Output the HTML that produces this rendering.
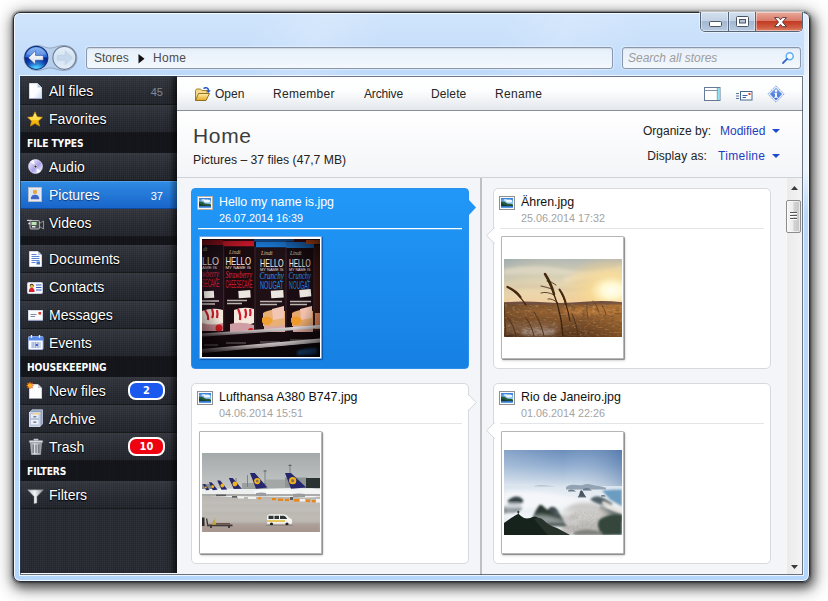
<!DOCTYPE html>
<html>
<head>
<meta charset="utf-8">
<title>Home</title>
<style>
*{box-sizing:border-box;margin:0;padding:0}
html,body{width:828px;height:601px;overflow:hidden;background:#fff;font-family:"Liberation Sans",sans-serif;}
svg{position:absolute;overflow:visible}
#win{position:absolute;left:13px;top:12px;width:797px;height:570px;border-radius:7px;
 background:
  linear-gradient(115deg,rgba(255,255,255,0) 0,rgba(255,255,255,0) 30%,rgba(255,255,255,.16) 38%,rgba(255,255,255,0) 46%,rgba(255,255,255,0) 60%,rgba(255,255,255,.14) 68%,rgba(255,255,255,0) 78%) 0 0/100% 64px no-repeat,
  linear-gradient(180deg,#d0e4fc 0,#c9e0fb 30px,#bcd9fa 64px,#b5d6fb 100%);
 border:1px solid #252d38;
 box-shadow:inset 0 0 0 1px rgba(255,255,255,.8), 0 0 2px 1px rgba(0,0,0,.42), 2px 4px 10px 2px rgba(0,0,0,.5), 2px 4px 18px 4px rgba(0,0,0,.32);}
#client{position:absolute;left:19px;top:75px;width:785px;height:501px;border:1px solid rgba(255,255,255,.75);}
#ci{position:absolute;left:0;top:0;width:783px;height:499px;background:#f3f5f9;overflow:hidden}
/* caption buttons */
#caps{position:absolute;left:700px;top:12px;width:103px;height:20px;border:1px solid #56647a;border-top:none;border-radius:0 0 5px 5px;overflow:hidden;
 box-shadow:0 0 0 1px rgba(255,255,255,.5)}
#caps>div{position:absolute;top:0;height:19px;box-shadow:inset 0 0 0 1px rgba(255,255,255,.45)}
.cb{background:linear-gradient(180deg,#d3dfee 0,#c3d2e4 45%,#a3b8d2 50%,#b6c9df 100%);}
#cmin{left:0;width:28px;border-right:1px solid #56647a}
#cmax{left:28px;width:27px;border-right:1px solid #56647a}
#cclose{left:55px;width:47px;background:linear-gradient(180deg,#e9aa9c 0,#d97b6a 45%,#c23b22 50%,#cf5a40 80%,#dc8468 100%);}
/* nav */
.box{position:absolute;top:47px;height:22px;border:1px solid #8a97aa;border-radius:3px;background:linear-gradient(180deg,#e6effa,#f3f8fd);
 font-size:12px;line-height:20px;white-space:nowrap;box-shadow:inset 0 1px 1px rgba(0,0,0,.10),0 0 0 1px rgba(255,255,255,.35)}
#addr{left:86px;width:527px;color:#4c4c4c;padding-left:7px}
#search{left:622px;width:179px;font-style:italic;color:#9c9c9c;padding-left:5px}
/* sidebar */
#side{position:absolute;left:0;top:0;width:157px;height:497px;overflow:hidden;
 background:
  repeating-linear-gradient(90deg,rgba(255,255,255,.03) 0,rgba(255,255,255,.03) 1px,rgba(0,0,0,0) 1px,rgba(0,0,0,0) 2px),
  repeating-linear-gradient(90deg,rgba(0,0,0,.06) 0,rgba(0,0,0,0) 5px,rgba(0,0,0,.05) 11px,rgba(0,0,0,0) 17px),
  repeating-linear-gradient(180deg,rgba(255,255,255,.025) 0,rgba(255,255,255,.025) 1px,rgba(0,0,0,0) 1px,rgba(0,0,0,0) 2px),
  #24272f;
 box-shadow:inset -6px 0 6px -4px rgba(0,0,0,.55)}
#side:after{content:"";position:absolute;right:0;top:0;width:8px;height:100%;background:linear-gradient(90deg,rgba(0,0,0,0),rgba(0,0,0,.4))}
.it{position:absolute;left:0;width:157px;height:28px;border-top:1px solid rgba(255,255,255,.09);border-bottom:1px solid rgba(0,0,0,.55);color:#fff;font-size:14px;line-height:27px;padding-left:29px;text-shadow:0 1px 1px #000,0 0 2px rgba(0,0,0,.8);
 background:linear-gradient(180deg,rgba(255,255,255,.05),rgba(255,255,255,0) 60%,rgba(0,0,0,.12))}
.it.sel{background:linear-gradient(180deg,#2e8ae2,#1965ca);border-top-color:#56a0ea;border-bottom-color:#0f4a9e;text-shadow:0 1px 1px rgba(0,0,40,.5)}
.hd{position:absolute;left:0;width:157px;height:20px;background:rgba(9,10,13,.64);color:#fff;font-weight:bold;font-size:10.2px;line-height:21px;padding-left:7px;font-family:"DejaVu Sans Condensed","DejaVu Sans","Liberation Sans",sans-serif;letter-spacing:-.1px}
.cnt{position:absolute;right:14px;top:1px;font-size:11px;color:#848993;text-shadow:none}
.it.sel .cnt{color:#fff}
.badge{position:absolute;left:108px;top:3px;width:37px;height:19px;border:2px solid #fff;border-radius:8px;font-size:11px;font-weight:bold;line-height:15px;text-align:center;color:#fff;text-shadow:none;font-family:"DejaVu Sans Condensed","DejaVu Sans","Liberation Sans",sans-serif}
/* toolbar */
#tb{position:absolute;left:157px;top:0;width:626px;height:35px;background:linear-gradient(180deg,#fff 0,#fcfdfd 45%,#e4e8ed 100%);border-bottom:1px solid #8a9099;font-size:12px;color:#262626}
#tb span{position:absolute;top:11px;line-height:14px;white-space:nowrap}
#hdr{position:absolute;left:157px;top:35px;width:626px;height:67px;background:linear-gradient(180deg,#fff,#f4f5f8);border-bottom:1px solid #cfd2d6}
#hdr h1{position:absolute;left:16px;top:13px;font-size:21px;font-weight:normal;letter-spacing:.65px;color:#3c3c3c;line-height:24px}
#hdr .sub{position:absolute;left:16px;top:42px;font-size:12.2px;color:#222;line-height:14px;white-space:nowrap}
.lbl{position:absolute;font-size:12px;color:#222;line-height:14px;text-align:right;white-space:nowrap}
.lnk{position:absolute;font-size:12px;color:#1c3ec0;line-height:14px;white-space:nowrap}
.dd{position:absolute;width:0;height:0;border-left:4px solid transparent;border-right:4px solid transparent;border-top:4px solid #1c49d0}
/* cards */
#vline{position:absolute;left:460px;top:102px;width:2px;height:400px;background:#bfc0c3}
.card{position:absolute;width:278px;height:181px;border:1px solid #d6d9de;border-radius:5px;background:#fff}
.card.sel{background:linear-gradient(180deg,#2198f8,#1680e3);border-color:#2b8fec;border-radius:4px}
.card .t{position:absolute;left:27px;top:6px;font-size:12.4px;line-height:15px;color:#111;white-space:nowrap}
.card .d{position:absolute;left:27px;top:23px;font-size:10.8px;line-height:13px;color:#a3a3a3;white-space:nowrap}
.card.sel .t,.card.sel .d{color:#fff}
.card .sep{position:absolute;left:6px;top:39px;width:264px;height:1px;background:#e3e5e8}
.card.sel .sep{background:#fff;height:1px;box-shadow:0 1px 0 rgba(255,255,255,.25)}
.card .th{position:absolute;left:7px;top:47px;width:123px;height:123px;background:#fff;border:1px solid #b6b6b6;border-radius:1px;box-shadow:1px 1px 1px rgba(0,0,0,.42),1px 2px 3px rgba(0,0,0,.12);overflow:hidden}
.card.sel .th{border-color:rgba(30,110,210,.6);box-shadow:1px 1px 1px rgba(0,30,90,.45)}
.th svg{left:2px}
.fi{position:absolute;left:5px;top:7px;width:16px;height:14px;border:1px solid #8e8e8e;background:#f6f6f6}
.fi i{position:absolute;left:1px;top:1px;width:12px;height:10px;background:linear-gradient(180deg,#3f86dc 0,#8cc0f0 30%,#d8ecfa 48%,#2f6a46 56%,#1e4a38 80%,#3f7fd0 90%,#5a9ae0 100%)}
.card.sel .fi{border-color:#b5aca4}
.arr{position:absolute;width:11px;height:11px;transform:rotate(45deg);background:#fff;border:1px solid #d6d9de}
/* scrollbar */
#sb{position:absolute;left:766px;top:102px;width:17px;height:397px;background:linear-gradient(90deg,#ebebeb,#f4f4f4);border-left:1px solid #f7f7f7}
#thumb{position:absolute;left:-1px;top:22px;width:15px;height:33px;border:1px solid #8c8c8c;border-radius:2px;background:linear-gradient(90deg,#f6f6f6 0,#ececec 45%,#d2d2d2 55%,#c6c6c6 100%);box-shadow:inset 0 0 0 1px rgba(255,255,255,.6)}
#thumb i{position:absolute;left:3px;width:7px;height:1px;background:#555;box-shadow:0 1px 0 #fff}
</style>
</head>
<body>
<div id="win"></div>
<div style="position:absolute;left:804px;top:14px;width:5px;height:200px;background:linear-gradient(180deg,rgba(255,255,255,.3) 0,rgba(255,255,255,.72) 35%,rgba(255,255,255,.72) 78%,rgba(255,255,255,0) 100%)"></div>
<div id="caps">
 <div id="cmin" class="cb"><svg width="14" height="7" style="left:8px;top:9px" viewBox="0 0 14 7"><rect x="0.5" y="0.5" width="12" height="5" rx="1.2" fill="#fff" stroke="#4a5464" stroke-width="1"/></svg></div>
 <div id="cmax" class="cb"><svg width="14" height="12" style="left:7px;top:4px" viewBox="0 0 14 12"><rect x="0.5" y="0.5" width="12" height="10" rx="1" fill="#fff" stroke="#4a5464"/><rect x="3.5" y="3.5" width="6" height="3.5" fill="#b4c4d8" stroke="#4a5464"/></svg></div>
 <div id="cclose"><svg width="13" height="11" style="left:17.500px;top:4.500px" viewBox="0 0 13 11"><path d="M.6.600h4l1.900 2.200L8.400.600h4L8.500 5.100l4 4.600h-4l-2-2.300-2 2.300h-4l4-4.600z" fill="#fff" stroke="#4a2c32" stroke-width=".9" stroke-linejoin="round"/></svg></div>
</div>
<!-- nav buttons -->
<svg width="64" height="32" style="left:20px;top:42px" viewBox="0 0 64 32">
 <defs>
  <linearGradient id="gb" x1="0" y1="0" x2="0" y2="1"><stop offset="0" stop-color="#6aa4f0"/><stop offset=".45" stop-color="#2e6cda"/><stop offset=".5" stop-color="#0a2890"/><stop offset=".78" stop-color="#0a36aa"/><stop offset="1" stop-color="#30bcff"/></linearGradient>
  <radialGradient id="gglow" cx=".5" cy="1" r=".55"><stop offset="0" stop-color="#5fe0ff" stop-opacity=".95"/><stop offset="1" stop-color="#2a9cf0" stop-opacity="0"/></radialGradient>
  <linearGradient id="gf" x1="0" y1="0" x2="0" y2="1"><stop offset="0" stop-color="#e6eff9"/><stop offset=".5" stop-color="#d3e2f3"/><stop offset="1" stop-color="#e3edf8"/></linearGradient>
  <linearGradient id="gar" x1="0" y1="0" x2="0" y2="1"><stop offset="0" stop-color="#fff"/><stop offset="1" stop-color="#d8dde6"/></linearGradient>
 </defs>
 <path d="M16.5 3.5C23 3.5 25 6 30 6S37 3.500 44.500 3.500A12.500 12.500 0 0 1 44.500 28.500C37 28.500 35 26 30 26S23 28.500 16.500 28.500A12.500 12.500 0 0 1 16.500 3.500Z" fill="rgba(160,180,205,.35)" stroke="rgba(110,125,145,.55)"/>
 <circle cx="16.300" cy="15.800" r="11.500" fill="url(#gb)" stroke="#14307c" stroke-width="1.200"/>
 <circle cx="16.300" cy="15.800" r="11" fill="url(#gglow)"/>
 <path d="M6.500 12A10.500 10.500 0 0 1 26 12Q16 16 6.500 12Z" fill="rgba(255,255,255,.22)"/>
 <path d="M8.300 15.800l7.200-7v4.600h7.800v4.800h-7.800v4.600z" fill="url(#gar)" stroke="#1a3a8a" stroke-width=".5" stroke-linejoin="round"/>
 <circle cx="44.400" cy="15.800" r="11.500" fill="url(#gf)" stroke="#6f7f96" stroke-width="1.200"/>
 <path d="M52.400 15.800l-7.200-7v4.600h-7.800v4.800h7.800v4.600z" fill="#c6d8ec" stroke="#b4c8e0" stroke-width=".5" stroke-linejoin="round"/>
</svg>
<div id="addr" class="box">Stores<svg width="7" height="10" style="left:51px;top:6px" viewBox="0 0 7 10"><path d="M.5 0L6.500 4.700.5 9.400z" fill="#111"/></svg><span style="position:absolute;left:66px;letter-spacing:.3px">Home</span></div>
<div id="search" class="box">Search all stores<svg width="14" height="14" style="left:158px;top:3px" viewBox="0 0 14 14"><circle cx="8.700" cy="5.200" r="3.500" fill="#f4faff" stroke="#62aef2" stroke-width="1.500"/><path d="M6.100 7.900L2 12" stroke="#3a68cc" stroke-width="1.800" stroke-linecap="round"/></svg></div>
<div id="client"><div id="ci">
 <div id="side">
  <div class="it" style="top:1px">All files<span class="cnt">45</span>
   <svg width="13" height="16" style="left:9px;top:5px" viewBox="0 0 13 16"><defs><linearGradient id="pg" x1="0" y1="0" x2="1" y2="1"><stop offset="0" stop-color="#fff"/><stop offset=".6" stop-color="#fbfcff"/><stop offset="1" stop-color="#c9d6f2"/></linearGradient></defs><path d="M.5.500h8l4 4v11H.500z" fill="url(#pg)" stroke="#e9edf5" stroke-width=".8"/><path d="M8.500.500v4h4z" fill="#b9c7e6"/><path d="M.500 15.500h12" stroke="#8e9cc0" stroke-width=".8"/></svg></div>
  <div class="it" style="top:29px">Favorites
   <svg width="16" height="16" style="left:7px;top:5px" viewBox="0 0 16 16"><defs><linearGradient id="st" x1="0" y1="0" x2="0" y2="1"><stop offset="0" stop-color="#fff08a"/><stop offset=".55" stop-color="#ffd93b"/><stop offset=".6" stop-color="#f7bd16"/><stop offset="1" stop-color="#e9a400"/></linearGradient></defs><path d="M8 .800l2.200 4.900 5.300.600-4 3.600 1.100 5.300L8 12.500l-4.600 2.700 1.100-5.300-4-3.600 5.300-.600z" fill="url(#st)" stroke="#c98a00" stroke-width=".6" stroke-linejoin="round"/></svg></div>
  <div class="hd" style="top:57px">FILE TYPES</div>
  <div class="it" style="top:77px">Audio
   <svg width="15" height="15" style="left:7.500px;top:5.300px" viewBox="0 0 16 16"><defs><linearGradient id="cd" x1="0" y1="0" x2="1" y2="1"><stop offset="0" stop-color="#f4f2ff"/><stop offset=".35" stop-color="#c9c2f6"/><stop offset=".55" stop-color="#a9a0ec"/><stop offset=".8" stop-color="#dcd8fb"/><stop offset="1" stop-color="#fff"/></linearGradient></defs><circle cx="8" cy="8" r="7.400" fill="url(#cd)" stroke="#efeefa" stroke-width=".7"/><path d="M8 8L2.500 3A7.400 7.400 0 0 1 6 .900z" fill="#fff" opacity=".8"/><path d="M8 8l5.500 5a7.400 7.400 0 0 1-3.500 2.100z" fill="#fff" opacity=".8"/><circle cx="8" cy="8" r="2.400" fill="#e8e6f6" stroke="#8a84b8" stroke-width=".5"/><circle cx="8" cy="8" r="1.200" fill="#23232c"/></svg></div>
  <div class="it sel" style="top:105px">Pictures<span class="cnt">37</span>
   <svg width="14" height="15" style="left:8.300px;top:4.800px" viewBox="0 0 15 16"><rect x=".5" y=".5" width="14" height="15" fill="#ededf0" stroke="#b9bcc4"/><rect x="2" y="2" width="11" height="11" fill="#d7e6f6"/><circle cx="7.500" cy="5.200" r="2.300" fill="#e8a33c"/><path d="M3 13c0-3.500 2-4.800 4.500-4.800S12 9.500 12 13z" fill="#3f66c8"/></svg></div>
  <div class="it" style="top:133px">Videos
   <svg width="17" height="11" style="left:7px;top:9px" viewBox="0 0 17 11"><path d="M0 .8h5v1.200H0z" fill="#d0d0d0"/><rect x="3" y="1.500" width="9.500" height="8.500" rx="1" fill="#4a4d52" stroke="#cfcfcf" stroke-width=".8"/><rect x="4.500" y="3" width="5" height="3" fill="#b8e8b0"/><rect x="5" y="7" width="3.500" height="1.500" fill="#e8e8e8"/><path d="M12.500 4.500L16.500 2v8l-4-2.500z" fill="#2e3034" stroke="#bdbdbd" stroke-width=".7"/><circle cx="2.200" cy="4.500" r="1" fill="#e6e6e6"/></svg></div>
  <div class="hd" style="top:161px;height:8px"></div>
  <div class="it" style="top:169px">Documents
   <svg width="13" height="16" style="left:9px;top:5px" viewBox="0 0 13 16"><path d="M.5.500h8.500l3.500 3.500v11.500H.500z" fill="#fdfeff" stroke="#dfe6f2" stroke-width=".8"/><path d="M9 .500v3.500h3.500z" fill="#bccbe8"/><path d="M2.500 3.500h5M2.500 5.500h8M2.500 7.500h8M2.500 9.500h8M2.500 11.500h4" stroke="#5f86d6" stroke-width="1"/><rect x="7.500" y="10.500" width="3.500" height="3" fill="#3f74d0"/></svg></div>
  <div class="it" style="top:197px">Contacts
   <svg width="16" height="12" style="left:7px;top:8px" viewBox="0 0 16 12"><rect x=".5" y=".5" width="15" height="11" rx="1" fill="#f7f8fb" stroke="#c9cede"/><path d="M1.800 10c0-3 1.300-4.200 2.900-4.200s2.900 1.200 2.900 4.200z" fill="#dc1f2c"/><circle cx="4.700" cy="3.700" r="2" fill="#3b2c26"/><circle cx="4.700" cy="4.300" r="1.500" fill="#f4b83a"/><path d="M9 3h5.500M9 5.500h5.500M9 8h5.500" stroke="#3a5fb4" stroke-width="1.200"/></svg></div>
  <div class="it" style="top:225px">Messages
   <svg width="15" height="11" style="left:8px;top:8px" viewBox="0 0 15 11"><rect x=".5" y=".5" width="14" height="9.500" fill="#fbfcfe" stroke="#d4dae8"/><path d="M.500 10.500h14" stroke="#8f9cc0"/><path d="M2.500 4.500h6M2.500 6.500h4.500" stroke="#7f8aa8" stroke-width="1"/><rect x="10.500" y="2" width="2.600" height="2.600" fill="#e23b2b"/></svg></div>
  <div class="it" style="top:253px">Events
   <svg width="16" height="15" style="left:8px;top:5px" viewBox="0 0 16 15"><rect x=".5" y="1.500" width="14.500" height="13" rx="1" fill="#fbfcff" stroke="#aab9de"/><path d="M.5 2.500a1 1 0 0 1 1-1h12.500a1 1 0 0 1 1 1V5.500H.500z" fill="#5a8bea"/><path d="M3.500 0v3M11.500 0v3" stroke="#e8eefc" stroke-width="1.300"/><path d="M3 8h10M3 10h10M3 12h10M5 7v6M7.500 7v6M10 7v6" stroke="#8ea0cc" stroke-width=".8"/><rect x="7.700" y="9" width="2.200" height="2" fill="#3a66d6"/></svg></div>
  <div class="hd" style="top:281px">HOUSEKEEPING</div>
  <div class="it" style="top:301px">New files<span class="badge" style="background:#1b59ee">2</span>
   <svg width="16" height="17" style="left:7px;top:4px" viewBox="0 0 16 17"><path d="M2.500 2.500h8.500l3.500 3.500v10.500H2.500z" fill="#fdfdfd" stroke="#e4e6ea" stroke-width=".8"/><path d="M11 2.500v3.500h3.500z" fill="#c9cdd6"/><path d="M2.500 16.500h12" stroke="#9a9ea8"/><path d="M3 0l.8 1.700L5.600 1l-.7 1.800L6.600 3.500l-1.700.8.700 1.700-1.800-.7L3 7l-.8-1.700-1.800.7.700-1.700L-.6 3.500l1.700-.7L.4 1l1.800.7z" fill="#ffb21c" stroke="#e0501a" stroke-width=".5"/></svg></div>
  <div class="it" style="top:329px">Archive
   <svg width="16" height="18" style="left:8px;top:3px" viewBox="0 0 16 18"><path d="M1.500 3.500L4 .800h10.500v14L12 17.500H1.500z" fill="#8fa0c0" stroke="#c9d2e6" stroke-width=".8"/><rect x="1.500" y="3.500" width="10.500" height="14" fill="#b9c4dc" stroke="#dfe5f2" stroke-width=".7"/><rect x="3" y="5" width="7.500" height="4" fill="#e8ecf6"/><path d="M4 5.500h7.500l1.500-1.500H5.500z" fill="#f2d38a"/><rect x="3" y="11" width="7.500" height="4.500" fill="#eef1f8"/><rect x="5.300" y="12.500" width="3" height="1.300" fill="#5a6a8c"/><rect x="5.300" y="7.200" width="3" height="1.200" fill="#5a6a8c"/></svg></div>
  <div class="it" style="top:357px">Trash<span class="badge" style="background:#ee0210">10</span>
   <svg width="16" height="17" style="left:8px;top:4px" viewBox="0 0 16 17"><defs><linearGradient id="tr" x1="0" y1="0" x2="1" y2="0"><stop offset="0" stop-color="#8f959c"/><stop offset=".4" stop-color="#e2e5e8"/><stop offset="1" stop-color="#80868e"/></linearGradient></defs><path d="M2.500 5h11l-1 11.500h-9z" fill="url(#tr)" stroke="#c9cdd2" stroke-width=".6"/><path d="M5.200 6.500v8.500M8 6.500v8.500M10.800 6.500v8.500" stroke="#5f656d" stroke-width="1"/><rect x="1.200" y="2.500" width="13.600" height="2.300" rx="1" fill="#d9dde1" stroke="#8b9198" stroke-width=".6"/><rect x="5.500" y=".8" width="5" height="1.800" rx=".8" fill="#c3c8ce"/></svg></div>
  <div class="hd" style="top:385px">FILTERS</div>
  <div class="it" style="top:405px">Filters
   <svg width="17" height="15" style="left:7px;top:7px" viewBox="0 0 17 15"><defs><linearGradient id="fu" x1="0" y1="0" x2="1" y2="0"><stop offset="0" stop-color="#b9bcc0"/><stop offset=".45" stop-color="#f2f3f4"/><stop offset="1" stop-color="#8f9398"/></linearGradient></defs><path d="M.500.800h16L10 7.500V14l-3 .8V7.500z" fill="url(#fu)" stroke="#7d8288" stroke-width=".5"/></svg></div>
 </div>
 <div id="tb">
  <svg width="17" height="16" style="left:17px;top:10px" viewBox="0 0 17 16"><defs><linearGradient id="fo" x1="0" y1="0" x2="0" y2="1"><stop offset="0" stop-color="#fdeeb0"/><stop offset="1" stop-color="#e9a91e"/></linearGradient></defs><path d="M1.500 14.500V4.500l1-1.500h4l1.500 1.500h5v2.500" fill="#f6d98a" stroke="#9a7420" stroke-width=".9"/><path d="M1.500 14.500L4.500 7.500h11l-3.500 7z" fill="url(#fo)" stroke="#8a6414" stroke-width=".9" stroke-linejoin="round"/><path d="M9.500 2.500c2.500-1.800 5-.5 5 2.200" fill="none" stroke="#1d4fd0" stroke-width="1.500"/><path d="M12.300 4.200h4.400l-2.200 2.800z" fill="#1d4fd0"/></svg>
  <span style="left:38px">Open</span><span style="left:96px;letter-spacing:.32px">Remember</span><span style="left:187px;letter-spacing:-.15px">Archive</span><span style="left:254px;letter-spacing:.12px">Delete</span><span style="left:318px;letter-spacing:.3px">Rename</span>
  <svg width="17" height="15" style="left:527px;top:11px" viewBox="0 0 17 15"><rect x=".5" y=".5" width="15.500" height="13" fill="#fff" stroke="#667a98"/><path d="M.5 3.500h13" stroke="#7f90aa"/><rect x="13.500" y="1" width="2" height="12" fill="#8fe2f2"/><path d="M13.300 1v12" stroke="#667a98" stroke-width=".7"/></svg>
  <svg width="17" height="10" style="left:559px;top:14.800px" viewBox="0 0 17 10"><path d="M0 2.500h3M0 5h3M0 7.500h3" stroke="#5c7594" stroke-width="1"/><rect x="4.500" y=".5" width="11.500" height="8.500" fill="#fff" stroke="#48688e"/><path d="M6.500 4.500h5M6.500 6.500h3.500" stroke="#3b62b0" stroke-width="1.100"/><rect x="12.500" y="2" width="2" height="2" fill="#e03a24"/></svg>
  <svg width="18" height="18" style="left:590px;top:8.600px" viewBox="0 0 18 18"><defs><linearGradient id="inf" x1="0" y1="0" x2="0" y2="1"><stop offset="0" stop-color="#7da4f0"/><stop offset="1" stop-color="#3568d6"/></linearGradient></defs><path d="M9 .800L17.200 9 9 17.200.800 9z" fill="#e9f0fd" stroke="#7f9fe6" stroke-width="1" stroke-dasharray="1.500 .8"/><path d="M9 2.800L15.200 9 9 15.200 2.800 9z" fill="url(#inf)"/><circle cx="9" cy="5.700" r="1.200" fill="#fff"/><path d="M7.500 7.800h2.400v4h1v1h-3.800v-1h1v-3h-.6z" fill="#fff"/></svg>
 </div>
 <div id="hdr">
  <h1>Home</h1>
  <div class="sub">Pictures – 37 files (47,7 MB)</div>
  <div class="lbl" style="right:92px;top:13px">Organize by:</div><div class="lnk" style="left:543px;top:13px">Modified</div><div class="dd" style="left:595px;top:18px"></div>
  <div class="lbl" style="right:96px;top:38px;letter-spacing:.1px">Display as:</div><div class="lnk" style="left:541px;top:38px;letter-spacing:.3px">Timeline</div><div class="dd" style="left:595px;top:43px"></div>
 </div>
 <div id="vline"></div>
 <div class="card sel" style="left:171px;top:112px"><svg class="fi2" width="16" height="14" style="left:5px;top:7px" viewBox="0 0 16 14"><defs><linearGradient id="fs1" x1="0" y1="0" x2="0" y2="1"><stop offset="0" stop-color="#2f7fdc"/><stop offset="1" stop-color="#9fd0f6"/></linearGradient></defs><rect x=".5" y=".5" width="15" height="13" fill="#fbfbfb" stroke="#b9aea4"/><rect x="2" y="2" width="12" height="6" fill="url(#fs1)"/><ellipse cx="10" cy="5" rx="3.200" ry="1.500" fill="#fff" opacity=".9"/><ellipse cx="6.500" cy="4" rx="2" ry="1" fill="#fff" opacity=".7"/><path d="M2 5.500q2.500-.5 4.500 1t4 1.200 3.500.8V11H2z" fill="#245c3c"/><path d="M2 7.500q3 .5 5 1.500t7 .5V11H2z" fill="#163e30"/><rect x="2" y="10" width="12" height="2" fill="#5a9be6"/><rect x="2" y="10" width="12" height=".8" fill="#2f68c0"/></svg><div class="t">Hello my name is.jpg</div><div class="d">26.07.2014 16:39</div><div class="sep"></div><div class="th" id="th1"><svg width="118" height="118" style="left:2px;top:2px" viewBox="0 0 118 118"><defs><clipPath id="c1"><rect width="118" height="118"/></clipPath><radialGradient id="v1" cx=".5" cy=".48" r=".72"><stop offset=".55" stop-color="#000" stop-opacity="0"/><stop offset="1" stop-color="#000" stop-opacity=".75"/></radialGradient><linearGradient id="rail" x1="0" y1="0" x2="0" y2="1"><stop offset="0" stop-color="#f2eeee"/><stop offset=".5" stop-color="#b9b0b2"/><stop offset="1" stop-color="#4a3c40"/></linearGradient><filter id="b1"><feGaussianBlur stdDeviation=".6"/></filter><filter id="b1b"><feGaussianBlur stdDeviation="1.2"/></filter></defs>
<g clip-path="url(#c1)"><rect width="118" height="118" fill="#1b0d12"/>
<rect x="0" y="0" width="118" height="3" fill="#3a0a10"/>
<rect x="0" y="1" width="21" height="5" fill="#a3121f"/><rect x="21" y="2" width="31" height="5.500" fill="#d3192c"/><rect x="54" y="2.500" width="30" height="6" fill="#1b7ad6"/><rect x="84" y="3" width="28" height="6" fill="#1a6cc2"/><rect x="52" y="0" width="40" height="2.500" fill="#0f4f96"/><rect x="104" y="1" width="14" height="4" fill="#d8521c"/>
<rect x="0" y="6" width="21.500" height="84" fill="#21101a"/><rect x="22" y="7.500" width="30.500" height="84" fill="#1a0b10"/><rect x="54" y="8.500" width="29.500" height="84" fill="#1f1016"/><rect x="84.500" y="9" width="27" height="84" fill="#1a0c12"/><rect x="112.500" y="6" width="6" height="86" fill="#3a1510"/>
<path d="M21.700 6v86M53 7v86M84 8v86M112 8v84" stroke="#4a3038" stroke-width=".8"/>
<g font-family="'Liberation Serif',serif" font-style="italic" fill="#d9c59a" font-size="5.500"><text x="27" y="15">Lindt</text><text x="59" y="15.500">Lindt</text><text x="88" y="15.500">Lindt</text><text x="1" y="12">dt</text></g>
<g font-family="'Liberation Sans',sans-serif" fill="#f3eee8" font-size="11.500"><text x="23.500" y="26.400" textLength="25.500" lengthAdjust="spacingAndGlyphs">HELLO</text><text x="58" y="27.500" textLength="23.500" lengthAdjust="spacingAndGlyphs">HELLO</text><text x="87" y="27.500" textLength="21.500" lengthAdjust="spacingAndGlyphs">HELLO</text><text x="0" y="26" textLength="17" lengthAdjust="spacingAndGlyphs">LLO</text></g>
<g font-family="'Liberation Sans',sans-serif" fill="#e6ded8" font-size="4.400"><text x="23.500" y="30.400" textLength="25.500" lengthAdjust="spacingAndGlyphs">MY NAME IS</text><text x="58" y="31.500" textLength="23.500" lengthAdjust="spacingAndGlyphs">MY NAME IS</text><text x="87" y="31.500" textLength="21.500" lengthAdjust="spacingAndGlyphs">MY NAME IS</text><text x="0" y="30.200" textLength="15" lengthAdjust="spacingAndGlyphs">AME IS</text></g>
<g font-family="'Liberation Serif',serif" font-style="italic" font-size="10.500"><text x="23.500" y="38.500" fill="#e6263c" textLength="26.500" lengthAdjust="spacingAndGlyphs">Strawberry</text><text x="0" y="38" fill="#d6223a" textLength="17" lengthAdjust="spacingAndGlyphs">wberry</text><text x="57.500" y="40" fill="#2f93ea" textLength="24.500" lengthAdjust="spacingAndGlyphs">Crunchy</text><text x="86.500" y="40" fill="#2888de" textLength="22.500" lengthAdjust="spacingAndGlyphs">Crunchy</text></g>
<g font-family="'Liberation Sans',sans-serif" font-size="10.500"><text x="23.500" y="48.500" fill="#d81a30" textLength="27" lengthAdjust="spacingAndGlyphs">CHEESECAKE</text><text x="0" y="48" fill="#c81a2e" textLength="17.500" lengthAdjust="spacingAndGlyphs">SECAKE</text><text x="58" y="49.800" fill="#2289e4" textLength="23.500" lengthAdjust="spacingAndGlyphs">NOUGAT</text><text x="87" y="49.800" fill="#1e7fd4" textLength="21.500" lengthAdjust="spacingAndGlyphs">NOUGAT</text></g>
<g fill="#ebe7e0"><rect x="36.500" y="51.500" width="12" height="7.500" transform="rotate(-4 42 55)"/><rect x="69" y="51.500" width="12.500" height="7.500" transform="rotate(-4 74 55)"/><rect x="97.500" y="50.500" width="11.500" height="7.500" transform="rotate(-5 102 54)"/><rect x="2" y="52" width="10" height="7" transform="rotate(-4 7 55)"/></g>
<g stroke="#d9d2cc" stroke-width="1.300" opacity=".85"><path d="M25 61.500h20M25 64.500h15M58 62.500h22M58 65.500h17M88 62.500h21M88 65.500h17M0 62h17M0 65h13"/></g>
<g filter="url(#b1)"><path d="M0 72q10-4 21-1v18q-10 4-21 1z" fill="#f3e6da"/><path d="M3 71q4 6 3 10M10 70q2 6 0 9M15 71q1 4 0 8" stroke="#c81a2c" stroke-width="2.200" fill="none"/><path d="M0 84q10 3 21 0v8H0z" fill="#c98d92"/><circle cx="17" cy="89" r="3.500" fill="#d21d24"/>
<path d="M32 71q10-4 20-1v14q-10 4-20 1z" fill="#f5e8dc"/><path d="M36 70q3 6 2 11M43 70q2 5 0 9M48 70q1 4 0 7" stroke="#cc1c2e" stroke-width="2.200" fill="none"/><path d="M28 85q12-3 24 1v8q-12 2-24-1z" fill="#cf9ea4"/><circle cx="49" cy="92" r="3" fill="#cf2026"/>
<path d="M61 74q10-6 22-2v14q-12 5-22 1z" fill="#e9b076"/><path d="M70 70l12-3v12l-11 2z" fill="#f1c6b4"/><path d="M60 79q5-3 9 0t-2 7q-5 1-7-3z" fill="#f0a030"/><path d="M62 86q10 3 21-1v8q-10 3-21 0z" fill="#d9a8a0"/>
<path d="M90 74q10-6 21-2v14q-11 5-21 1z" fill="#e6a86e"/><path d="M98 70l12-3v12l-11 2z" fill="#f0c0ac"/><path d="M89 79q5-3 9 0t-2 7q-5 1-7-3z" fill="#ee9a2c"/><path d="M91 86q10 3 20-1v8q-10 3-20 0z" fill="#d6a29a"/>
<path d="M113 74h5v16h-5z" fill="#e88a5a"/></g>
<rect x="0" y="93" width="118" height="25" fill="#150a0e"/>
<g stroke="#cfc7c4" stroke-width=".9" opacity=".6"><path d="M24 104h20M58 103h20M88 101h20M2 106h14"/></g>
<path d="M0 94.500L118 86v3.200L0 97.800z" fill="url(#rail)" filter="url(#b1)"/>
<path d="M0 110L118 99.500v4L0 114.200z" fill="url(#rail)" filter="url(#b1)"/>
<path d="M0 114.500L118 104v14H0z" fill="#0e0709"/>
<path d="M95 112q8-3 20-3v6q-12 2-20 1z" fill="#1d5ea8" filter="url(#b1b)" opacity=".8"/>
<rect width="118" height="118" fill="url(#v1)"/></g></svg></div></div>
 <div class="card" style="left:473px;top:112px"><svg class="fi2" width="16" height="14" style="left:5px;top:7px" viewBox="0 0 16 14"><defs><linearGradient id="fs2" x1="0" y1="0" x2="0" y2="1"><stop offset="0" stop-color="#2f7fdc"/><stop offset="1" stop-color="#9fd0f6"/></linearGradient></defs><rect x=".5" y=".5" width="15" height="13" fill="#fbfbfb" stroke="#8f8f8f"/><rect x="2" y="2" width="12" height="6" fill="url(#fs2)"/><ellipse cx="10" cy="5" rx="3.200" ry="1.500" fill="#fff" opacity=".9"/><ellipse cx="6.500" cy="4" rx="2" ry="1" fill="#fff" opacity=".7"/><path d="M2 5.500q2.500-.5 4.500 1t4 1.200 3.500.8V11H2z" fill="#245c3c"/><path d="M2 7.500q3 .5 5 1.500t7 .5V11H2z" fill="#163e30"/><rect x="2" y="10" width="12" height="2" fill="#5a9be6"/><rect x="2" y="10" width="12" height=".8" fill="#2f68c0"/></svg><div class="t">Ähren.jpg</div><div class="d">25.06.2014 17:32</div><div class="sep"></div><div class="th" id="th2"><svg width="118" height="78" style="left:2px;top:22px" viewBox="0 0 118 78"><defs><clipPath id="c2"><rect width="118" height="78"/></clipPath><linearGradient id="sk2" x1="0" y1="0" x2="0" y2="1"><stop offset="0" stop-color="#b3b9b4"/><stop offset=".18" stop-color="#d0ccb6"/><stop offset=".38" stop-color="#ead9b0"/><stop offset=".56" stop-color="#f0d0a2"/></linearGradient><linearGradient id="sk2b" x1="0" y1="0" x2="1" y2=".5"><stop offset="0" stop-color="#8ea0aa" stop-opacity=".5"/><stop offset=".45" stop-color="#d8c8a8" stop-opacity="0"/></linearGradient><radialGradient id="sun" cx="0" cy="0" r="1" gradientUnits="userSpaceOnUse" gradientTransform="translate(107.500 31.500) scale(50 36)"><stop offset="0" stop-color="#fffef4"/><stop offset=".2" stop-color="#fff8d0"/><stop offset=".42" stop-color="#fbdc92" stop-opacity=".75"/><stop offset="1" stop-color="#f3c47c" stop-opacity="0"/></radialGradient><linearGradient id="fd2" x1="0" y1="0" x2="0" y2="1"><stop offset="0" stop-color="#7d5430"/><stop offset=".25" stop-color="#9a6434"/><stop offset="1" stop-color="#50301a"/></linearGradient><linearGradient id="fd2b" x1="0" y1="0" x2="1" y2="0"><stop offset="0" stop-color="#2a1a10" stop-opacity=".25"/><stop offset=".6" stop-color="#c07a30" stop-opacity="0"/><stop offset="1" stop-color="#d88a30" stop-opacity=".35"/></linearGradient><filter id="b2"><feGaussianBlur stdDeviation="1.400"/></filter><filter id="b2s"><feGaussianBlur stdDeviation=".35"/></filter><filter id="n2" x="0" y="0" width="1" height="1"><feTurbulence type="fractalNoise" baseFrequency=".18 .5" numOctaves="3" seed="5"/><feColorMatrix values="0 0 0 0 .16 0 0 0 0 .08 0 0 0 0 .03 0 0 0 2.200 -1"/></filter><filter id="n2b" x="0" y="0" width="1" height="1"><feTurbulence type="fractalNoise" baseFrequency=".25 .6" numOctaves="2" seed="11"/><feColorMatrix values="0 0 0 0 .85 0 0 0 0 .6 0 0 0 0 .35 0 0 0 2 -1.150"/></filter></defs>
<g clip-path="url(#c2)"><rect width="118" height="78" fill="url(#sk2)"/><rect width="118" height="44" fill="url(#sk2b)"/>
<g filter="url(#b2)" opacity=".7"><path d="M0 10q30-6 60 0t58-4v6q-30 6-58 4T0 16z" fill="#e4dcc6"/><path d="M0 27q25-5 50 0t40-2v4q-20 4-40 2T0 31z" fill="#d8c6a8"/><path d="M60 19q25-8 58-6v5q-30 0-58 6z" fill="#f2e4c2"/></g>
<rect width="118" height="78" fill="url(#sun)"/>
<rect x="0" y="44" width="118" height="34" fill="url(#fd2)"/><rect x="0" y="44" width="118" height="34" fill="url(#fd2b)"/>
<path d="M0 43.300q20-1.500 40 0t40-.5 38 .5v2.200H0z" fill="#6f5040" filter="url(#b2s)"/>
<g filter="url(#b2)"><path d="M60 49q25-3 58-4v9q-30 2-58 2z" fill="#c8823c" opacity=".55"/><path d="M0 64q25-3 55 0v10q-28 3-55 0z" fill="#8f6a50" opacity=".6"/><path d="M18 70q15-2 32 0v6q-15 2-32 0z" fill="#b0a49c" opacity=".6"/></g>
<rect x="0" y="45" width="118" height="33" filter="url(#n2)"/><rect x="0" y="45" width="118" height="33" filter="url(#n2b)" opacity=".6"/>
<g fill="none" stroke="#3a2210" stroke-linecap="round" filter="url(#b2s)"><path d="M59 77Q57 45 41 15" stroke-width="1.400"/><path d="M41 15q6 9 9 20" stroke-width="2.500" stroke="#46290f"/><path d="M22 46Q14 34 3.500 28" stroke-width="1.300"/><path d="M3.500 28q9 4 13 10" stroke-width="2.200" stroke="#46290f"/><path d="M66 62Q63 44 55.500 30.500" stroke-width="1.100"/><path d="M55.500 30.500q5 7 6.500 15" stroke-width="2.100" stroke="#46290f"/><path d="M48 30q-6-2-11-3M50 36q-7-4-13-2M52 26q-5-4-9-4M54 44q-6-5-10-4" stroke-width=".8"/><path d="M40 77q-3-14-10-24M30 77q-2-10-8-18M74 77q-1-12-6-22M12 77Q10 66 3 58M2 77Q1 60 0 44" stroke-width="1" stroke="#4f321a"/><path d="M95 54q-2-8-6-12M102 56q-1-6-4-10M84 60q-2-10-1-16" stroke-width=".9" stroke="#6a4424"/></g>
</g></svg></div></div>
 <div class="card" style="left:171px;top:307px"><svg class="fi2" width="16" height="14" style="left:5px;top:7px" viewBox="0 0 16 14"><defs><linearGradient id="fs3" x1="0" y1="0" x2="0" y2="1"><stop offset="0" stop-color="#2f7fdc"/><stop offset="1" stop-color="#9fd0f6"/></linearGradient></defs><rect x=".5" y=".5" width="15" height="13" fill="#fbfbfb" stroke="#8f8f8f"/><rect x="2" y="2" width="12" height="6" fill="url(#fs3)"/><ellipse cx="10" cy="5" rx="3.200" ry="1.500" fill="#fff" opacity=".9"/><ellipse cx="6.500" cy="4" rx="2" ry="1" fill="#fff" opacity=".7"/><path d="M2 5.500q2.500-.5 4.500 1t4 1.200 3.500.8V11H2z" fill="#245c3c"/><path d="M2 7.500q3 .5 5 1.500t7 .5V11H2z" fill="#163e30"/><rect x="2" y="10" width="12" height="2" fill="#5a9be6"/><rect x="2" y="10" width="12" height=".8" fill="#2f68c0"/></svg><div class="t">Lufthansa A380 B747.jpg</div><div class="d">04.06.2014 15:51</div><div class="sep"></div><div class="th" id="th3"><svg width="118" height="79" style="left:2px;top:21px" viewBox="0 0 118 79"><defs><clipPath id="c3"><rect width="118" height="79"/></clipPath><linearGradient id="sk3" x1="0" y1="0" x2="0" y2="1"><stop offset="0" stop-color="#a4a9ab"/><stop offset="1" stop-color="#c9cbc9"/></linearGradient><linearGradient id="gr3" x1="0" y1="0" x2="0" y2="1"><stop offset="0" stop-color="#b4b2ae"/><stop offset=".3" stop-color="#c2bfba"/><stop offset=".75" stop-color="#bdb8b2"/><stop offset="1" stop-color="#a99a94"/></linearGradient><filter id="b3"><feGaussianBlur stdDeviation=".4"/></filter><filter id="b3b"><feGaussianBlur stdDeviation="1"/></filter></defs>
<g clip-path="url(#c3)"><rect width="118" height="40" fill="url(#sk3)"/>
<g filter="url(#b3)"><rect x="40" y="30" width="26" height="6" fill="#9aa09f"/><rect x="64" y="26.500" width="40" height="9" fill="#a3a8a6"/><rect x="83" y="24.500" width="22" height="10" fill="#8d9494"/><rect x="104" y="25" width="14" height="10" fill="#2b3232"/><rect x="0" y="31" width="12" height="5" fill="#858c8c"/>
<path d="M63 17v18M88 11v16M45.500 22v12M34 25v9" stroke="#6d7373" stroke-width=".8"/><path d="M61.500 18h3M86.500 12.500h3" stroke="#5d6363" stroke-width="1.200"/></g>
<rect x="0" y="39" width="118" height="40" fill="url(#gr3)"/>
<g filter="url(#b3)"><path d="M0 36h10l10-.5 20 .5h20l30-1 20 .5 8 1v6l-30 1.500-30-.5-30 .5-20-1H0z" fill="#eef0f0"/><path d="M52 38q14-3 36-1l6 4q-20 3-40 1z" fill="#f8f9f9"/><path d="M88 37q14-2 30-.5v7q-16 2-26 0z" fill="#f3f4f4"/><path d="M0 41h118v2H0z" fill="#8d8c8a" opacity=".7"/>
<path d="M54 40q6-1 10 0v3h-10zM91 41q6-1 12 0v3h-12z" fill="#9a9c9e"/>
<g fill="#25276c"><path d="M83 20h6l15.300 14.600L89 35.700z"/><path d="M48 20h4.800l12.600 14.600L54 35.700z"/><path d="M26.800 24.900h3.900l9.100 10.800-8 .300z"/><path d="M15.200 27.500h3l7.100 8.900-5.800.400z"/><path d="M6.900 29.200h2.600l6.100 7.600-4.800.400z"/><path d="M1 31h2l4.500 6-3.500.300z"/></g>
<g fill="#f2b21c"><circle cx="90.700" cy="27.700" r="3.600"/><circle cx="55.200" cy="28.100" r="3.100"/><circle cx="32.900" cy="31" r="2.400"/><circle cx="20.300" cy="32.500" r="1.900"/><circle cx="10.600" cy="33.500" r="1.500"/><circle cx="3.700" cy="34.500" r="1.100"/></g>
<g fill="#3a3c7c"><circle cx="90.700" cy="27.700" r="1.700" opacity=".55"/><circle cx="55.200" cy="28.100" r="1.400" opacity=".55"/></g>
<g fill="#e8861c"><rect x="70" y="45" width="4" height="2.200"/><rect x="76" y="45.500" width="5" height="2.400"/><rect x="83" y="45.800" width="4" height="2.300"/><rect x="92" y="46" width="5" height="2.600"/><rect x="104" y="46.500" width="4" height="2.600"/><rect x="110" y="47" width="3.500" height="2.400"/><rect x="56" y="44.500" width="3" height="1.800"/></g>
<g fill="#f1f1ef"><rect x="36" y="43.500" width="6" height="2"/><rect x="46" y="44" width="8" height="2"/><rect x="98" y="46" width="5" height="2.500"/><rect x="114" y="46" width="4" height="3.500"/></g>
<g fill="#5a5c60"><rect x="14" y="41.500" width="10" height="1.600"/><rect x="30" y="43" width="5" height="1.600"/><rect x="88" y="44" width="3" height="3"/></g></g>
<g filter="url(#b3b)" opacity=".5"><path d="M0 52h118v1.200H0zM0 60h118v1H0z" fill="#aaa6a0"/><path d="M0 70h118v9H0z" fill="#a38e88"/></g>
<g filter="url(#b3)"><path d="M65 64q0-2.500 2.500-2.700h14.500q3 .2 5 3.500l2.500 1.200q.8.600.5 2.500v2.300H65z" fill="#f4f4f2"/><path d="M66.500 62.800h5v3.200h-5zM72.500 62.800h4.500v3.200h-4.500zM78 62.800h4q1.800.4 3.200 3.200H78z" fill="#2f3436"/><rect x="65" y="67.300" width="18" height="1.500" fill="#e2b82c"/><circle cx="69.500" cy="71" r="1.600" fill="#222"/><circle cx="85" cy="71" r="1.600" fill="#222"/><path d="M64 72.500h27" stroke="#8a8682" stroke-width=".8"/>
<path d="M5 71.500h25.500v1.800H5z" fill="#3f3a38"/><path d="M5 71.500l-1-6h1.200l1 6zM0 64.500h2.500v8.500H0z" fill="#2f2c2c"/><path d="M12 67l1.500 4.500h-3zM13 66.500v-1.500" fill="#c8a838" stroke="#b89828" stroke-width=".6"/><circle cx="9" cy="74" r="1" fill="#222"/><circle cx="27" cy="74" r="1" fill="#222"/><path d="M14 70h14v1.500H14z" fill="#6a5048"/></g>
</g></svg></div></div>
 <div class="card" style="left:473px;top:307px"><svg class="fi2" width="16" height="14" style="left:5px;top:7px" viewBox="0 0 16 14"><defs><linearGradient id="fs4" x1="0" y1="0" x2="0" y2="1"><stop offset="0" stop-color="#2f7fdc"/><stop offset="1" stop-color="#9fd0f6"/></linearGradient></defs><rect x=".5" y=".5" width="15" height="13" fill="#fbfbfb" stroke="#8f8f8f"/><rect x="2" y="2" width="12" height="6" fill="url(#fs4)"/><ellipse cx="10" cy="5" rx="3.200" ry="1.500" fill="#fff" opacity=".9"/><ellipse cx="6.500" cy="4" rx="2" ry="1" fill="#fff" opacity=".7"/><path d="M2 5.500q2.500-.5 4.500 1t4 1.200 3.500.8V11H2z" fill="#245c3c"/><path d="M2 7.500q3 .5 5 1.500t7 .5V11H2z" fill="#163e30"/><rect x="2" y="10" width="12" height="2" fill="#5a9be6"/><rect x="2" y="10" width="12" height=".8" fill="#2f68c0"/></svg><div class="t">Rio de Janeiro.jpg</div><div class="d">01.06.2014 22:26</div><div class="sep"></div><div class="th" id="th4"><svg width="118" height="85" style="left:2px;top:18px" viewBox="0 0 118 85"><defs><clipPath id="c4"><rect width="118" height="85"/></clipPath><clipPath id="c4n"><ellipse cx="82" cy="73" rx="21" ry="13"/></clipPath><linearGradient id="sk4" x1="0" y1="0" x2="0" y2="1"><stop offset="0" stop-color="#6a8dba"/><stop offset=".18" stop-color="#8eabcf"/><stop offset=".34" stop-color="#bccde1"/><stop offset=".44" stop-color="#dde6ef"/><stop offset=".6" stop-color="#eef1f5"/><stop offset="1" stop-color="#e4e7ea"/></linearGradient><linearGradient id="sk4b" x1="0" y1="0" x2="1" y2="0"><stop offset="0" stop-color="#fff" stop-opacity=".2"/><stop offset=".5" stop-color="#fff" stop-opacity="0"/><stop offset="1" stop-color="#2a5590" stop-opacity=".32"/></linearGradient><filter id="b4"><feGaussianBlur stdDeviation=".9"/></filter><filter id="b4b"><feGaussianBlur stdDeviation="2"/></filter><filter id="b4s"><feGaussianBlur stdDeviation=".45"/></filter><filter id="n4" x="0" y="0" width="1" height="1"><feTurbulence type="fractalNoise" baseFrequency=".55" numOctaves="2" seed="7"/><feColorMatrix values="0 0 0 0 .25 0 0 0 0 .25 0 0 0 0 .25 0 0 0 1.600 -.7"/></filter></defs>
<g clip-path="url(#c4)"><rect width="118" height="85" fill="url(#sk4)"/><rect width="118" height="36" fill="url(#sk4b)"/>
<path d="M98 40.500q10-1 20-1v17l-12-7z" fill="#6c9cbf" filter="url(#b4)"/>
<g filter="url(#b4s)"><path d="M62 37q4-2.800 8-2.200t8 .4q5-1.800 9-.8t8 1.600l7 1.700v1.800H62z" fill="#93a3b3"/><path d="M30 36q6-1.600 12-.8t10 1.300H30z" fill="#b7c4d0"/><path d="M64 40.500q3-1.500 6-.5l2 1.500h-8zM79 39q3-1.500 6-.5l3 2h-9z" fill="#6c7e8e"/><path d="M97 45.500q2-1.200 4 0l1 1h-5z" fill="#5f7282"/></g>
<path d="M73.500 47.500q1.800-2 2.800-6.500 1-1.500 2.200 0 1.500 3.500 4 6.500z" fill="#46525e" filter="url(#b4s)"/>
<g filter="url(#b4b)"><path d="M0 42q30-3 55 3t35 4l-6 10H0z" fill="#f4f6f9"/></g>
<g filter="url(#b4)"><path d="M86 49.500q4-4 9-3t8 3.500l6 4-4 3q-12-2-19-7.500z" fill="#505e66"/><path d="M99 51l19 9v5l-20-11z" fill="#e7e4de"/><path d="M96 56l22 8v8l-24-10z" fill="#6f7c7a"/>
</g><g filter="url(#b4b)"><path d="M58 64q6-10 20-11t24 7l8 10-2 15H60q-6-10-2-21z" fill="#bab6b2" opacity=".92"/><path d="M68 58q10-5 22-1t8 10-16 4-14-13z" fill="#d6d4d2" opacity=".7"/></g>
<g clip-path="url(#c4n)"><rect x="60" y="58" width="44" height="27" filter="url(#n4)" opacity=".4"/></g>
<g filter="url(#b4)"><path d="M95 70q10-7 23-5v20H98q-6-8-3-15z" fill="#36463c"/><path d="M70 82q12-5 28 0v3H70z" fill="#7f827c"/>
<path d="M3.500 51q4-4.500 9-4.500t7 4.500l-2 3h-13z" fill="#39454a"/><path d="M0 57q6-4 13-2.500t4 5.500l-8 4H0z" fill="#47545a"/></g>
<g filter="url(#b4b)"><path d="M0 53q10-1 20 1v5H0zM0 62q8-1 16 1t14-2v8H0z" fill="#f2f5f8" opacity=".9"/></g>
<g filter="url(#b4)"><path d="M28 69q4-10 7.500-14 2-1.200 4 1.500l4 3.500q3-4 6-3t6 6l7 13H34z" fill="#27342f"/><path d="M44 60q3-3 6-2.500t5 6.500l-4 1z" fill="#404c50"/></g>
<g filter="url(#b4b)"><path d="M24 66q14-4 30 2t26-2l-6 8H30z" fill="#eef1f4" opacity=".55"/><path d="M52 62q10-4 20-2l-8 8z" fill="#f4f6f8" opacity=".6"/></g>
<g filter="url(#b4s)"><path d="M0 73q6-4.500 12-8l2.500-1.200 2.500 2.200q3 2.500 6 2.500t7-2q4 0 7 3.500t13 7.500 15 7.500H0z" fill="#19221e"/><path d="M14.300 60.800v3.600M13 62h2.600" stroke="#19221e" stroke-width=".9"/><path d="M30 69q6-3 10 1.500t13 7.500l13 7H44z" fill="#26332c"/></g>
</g></svg></div></div>
 <svg width="9" height="17" style="left:448px;top:123px" viewBox="0 0 9 17"><path d="M0 1L1 1 8 8.500 1 16 0 16z" fill="#2095f5"/></svg>
 <svg width="9" height="17" style="left:466px;top:151px" viewBox="0 0 9 17"><path d="M9 1L8 1 .7 8.500 8 16 9 16" fill="#fff" stroke="#d3d6db" stroke-width="1"/><path d="M8.600 1.800v13.400" stroke="#fff" stroke-width="1.400"/></svg>
 <svg width="9" height="17" style="left:448px;top:318px" viewBox="0 0 9 17"><path d="M0 1L1 1 8.300 8.500 1 16 0 16" fill="#fff" stroke="#d3d6db" stroke-width="1"/><path d="M.4 1.800v13.400" stroke="#fff" stroke-width="1.400"/></svg>
 <svg width="9" height="17" style="left:466px;top:346px" viewBox="0 0 9 17"><path d="M9 1L8 1 .7 8.500 8 16 9 16" fill="#fff" stroke="#d3d6db" stroke-width="1"/><path d="M8.600 1.800v13.400" stroke="#fff" stroke-width="1.400"/></svg>
 <div id="sb">
  <svg width="7" height="4" style="left:3.900px;top:7.500px" viewBox="0 0 7 4"><path d="M0 4L3.500 0 7 4z" fill="#3a3a3a"/></svg>
  <div id="thumb"><i style="top:11px"></i><i style="top:14px"></i><i style="top:17px"></i></div>
  <svg width="7" height="4" style="left:4.200px;top:386.500px" viewBox="0 0 7 4"><path d="M0 0L3.500 4 7 0z" fill="#3a3a3a"/></svg>
 </div>
 <div style="position:absolute;left:0;top:0;width:783px;height:499px;border:1px solid rgba(45,60,80,.7);pointer-events:none"></div>
</div></div>
</body>
</html>
